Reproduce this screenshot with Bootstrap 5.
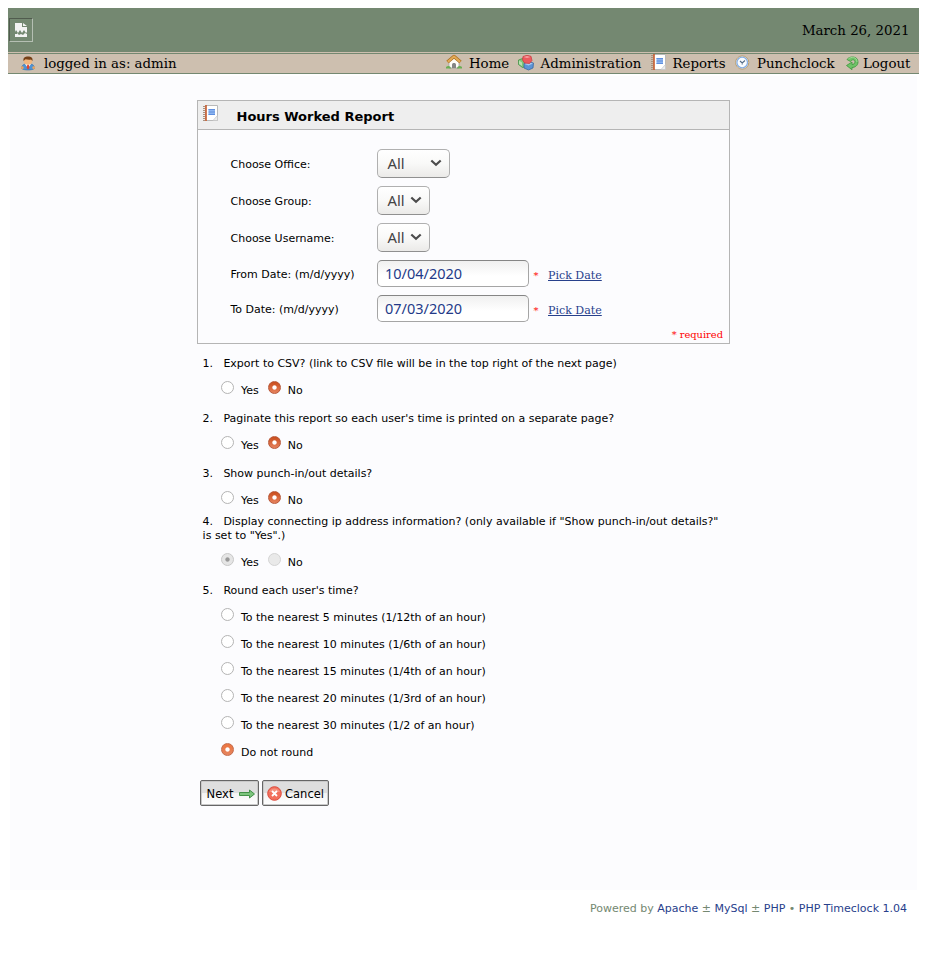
<!DOCTYPE html>
<html lang="en">
<head>
<meta charset="utf-8">
<meta name="viewport" content="width=device-width, initial-scale=1">
<title>Hours Worked Report</title>
<link rel="stylesheet" href="https://cdn.jsdelivr.net/npm/bootstrap@5.3.0/dist/css/bootstrap.min.css">
<style>
body{padding:8px;background:#fff;color:#000;font:11px/14px "DejaVu Sans",sans-serif}
.top-bar{height:44px;background:#748871;font:13.33px/16px "DejaVu Serif",serif;padding-right:9.500px;padding-left:1px}
.top-date{padding-top:2px}
.broken-img{width:24px;height:24px;border:1px solid;border-color:#505b4e #b5bfb3 #b5bfb3 #505b4e}
.menu-bar{height:22px;background:#cdbfaf;border-bottom:1px solid #748871;box-shadow:inset 0 1px #cdbfaf,inset 0 2px #748871;font:13.33px/16px "DejaVu Serif",serif}
.menu-bar a{color:#000;text-decoration:none;white-space:nowrap;padding-top:3px}
.menu-bar svg{margin-top:-1px}
.menu-bar span{display:block;padding-top:1px}
.menu-bar .w-admin svg{margin-top:0}
.menu-bar .user-link svg{margin-top:1px}
.w-home{width:72px}.w-admin{width:133px}.w-reports{width:84px}.w-clock{width:110px}.w-logout{width:74px}
.g7{gap:7px}.g6{gap:6px}.g3{gap:2px}
.w-admin{gap:6.600px}.w-reports{gap:5.500px}
.page-area{margin:2px 2px 0;height:814px;background:#fcfcfe;padding:24px 0 0 187px}
.report-box{width:533px;height:244px;border:1px solid #b5b5b5}
.report-head{height:29px;background:#eee;border-bottom:1px solid #b5b5b5;padding-left:5px;gap:17.500px}
.report-head svg{margin-top:4px}
.report-head h1{font:bold 13px/16px "DejaVu Sans",sans-serif;margin:8px 0 0}
.field-list{padding:19px 0 0 32.500px}
.field-row{height:29px;margin-bottom:8px}
.field-row.date-row{height:27px}
.field-row label{width:146.500px;padding-top:2px}
.pick-box{height:29px;width:53px;border:1px solid #b0b0b0;border-bottom-color:#909090;border-radius:5px;background:linear-gradient(#fff,#f9f9f8 50%,#ebeae8);color:#444;font:14.8px/26px "Noto Sans",sans-serif;padding:0 7px 2px 9.500px}
.pick-box svg{margin-top:1px}
.pick-box.wide{width:73px}
.date-box{width:152px;height:27px;border:1px solid #a5a5a5;border-top-color:#858585;border-radius:5px;background:linear-gradient(#f0f0f0,#fff 60%);color:#243a88;font:14.5px/20px "Noto Sans",sans-serif;padding:0 7px 2px}
.star{color:red;width:19px;padding-left:4.500px;font:10px/14px "DejaVu Serif",serif;padding-top:4px}
.pick-link{color:#27408b;font:11.050px/14px "DejaVu Serif",serif;padding-top:4px}
.req-note{color:red;font:9.900px/12px "DejaVu Serif",serif;padding-right:6px;margin-top:-1px}
.question-list{width:533px;padding:13px 0 0 5.600px}
.question-list p{margin:0 0 7px}
.question-list b{font-weight:400;display:inline-block;width:20.800px}
.opt-row{height:27px;padding-left:18.400px;margin-bottom:7px}
.opt-row.tight{margin-bottom:0}
.opt-row label{display:flex;align-items:center;white-space:nowrap;margin-top:-2px}
.opt-row label+label{margin-left:9px}
.dot{width:13px;height:13px;border-radius:50%;border:1px solid #b4b4b4;background:#fff;margin:-7px 7px 0 0;flex:none}
.dot.on{border-color:#b8593a;background:radial-gradient(circle,#fff 0 1.7px,transparent 2.6px),linear-gradient(#c94d1c,#e6825e)}
.dot.soft{border-color:#c36b4c;background:radial-gradient(circle,#fff 0 1.7px,transparent 2.6px),linear-gradient(#ed7540,#e5855f)}
.dot.off{border-color:#d4d4d4;background:#e9e9e9}
.dot.off-on{border-color:#c8c8c8;background:radial-gradient(circle,#999 0 1.7px,transparent 2.6px),#e5e5e5}
.act-row{padding:13px 0 0 3px;gap:3px}
.act-btn{height:26px;border:1px solid #666;border-radius:2px;box-shadow:inset 0 0 0 1px #c9c9c9;background:linear-gradient(#dedede 0 48%,#f3f3f3 52%,#fff);font:12.800px/14px "DejaVu Sans Condensed","DejaVu Sans",sans-serif;color:#000;padding:1px 0 0}
.next-btn{width:59px;gap:6px;padding-left:3px}.cancel-btn{width:67px;gap:3px}
.foot-line{color:#748871;padding:12px 12px 0 0}
.foot-line a{color:#27408b;text-decoration:none}
</style>
<script src="https://cdn.jsdelivr.net/npm/bootstrap@5.3.0/dist/js/bootstrap.bundle.min.js"></script>
</head>
<body>
<svg class="d-none">
<symbol id="book" viewBox="0 0 16 16"><path fill="#fff" stroke="#b9b9b9" d="M2.500.5h12v15h-12z"/><path fill="#eee" stroke="#c4c4c4" stroke-width=".7" d="M10 15.500h4.500v-5z"/><path fill="#c75a2c" d="M2.200 0h1.600v16H2.200z"/><path stroke="#a99280" stroke-width="2" stroke-dasharray="1 1" d="M1 1v15"/><path fill="#8db5f0" d="M5.500 4h6.500v6H5.500z"/><path stroke="#5f8fe0" d="M5.500 4.500H12M5.500 9.500H12"/><path stroke="#4779d0" stroke-width=".6" d="M5.500 7H12"/></symbol>
<symbol id="chev" viewBox="0 0 12 8"><path fill="none" stroke="#4c4c4c" stroke-width="2.200" d="m1.300 1.500 4.700 4.300 4.700-4.300"/></symbol>
</svg>
<header>
<div class="top-bar d-flex align-items-center justify-content-between">
<div class="broken-img d-flex align-items-center justify-content-center"><svg width="12" height="14" viewBox="0 0 12 14"><path fill="#f3f3f3" d="M0 0h7v4h5v5l-1 1-2-3-2 3-2-3-2 3-2-3-1 2H0zM8 0l4 3H8zM0 11h2v-1l2 2 2-1 2 1 2-2 2 1v3H0z"/></svg></div>
<div class="top-date">March 26, 2021</div>
</div>
<nav class="menu-bar d-flex">
<a class="d-flex me-auto user-link" href="#"><svg class="ms-2 me-1" width="24" height="16" viewBox="0 0 24 16"><path fill="#4f93d4" stroke="#346da8" stroke-width=".6" d="M5.500 12.500c.2-3 2-4.500 4-4.500h5c2 0 4 1.500 4 4.500-3 2-10 2-13 0z"/><path fill="#fff" d="m9 8 3 4 3-4z"/><path fill="#e0452f" d="M11.300 8.500h1.500l.7 3.500-1.500 1.500-1.300-1.500z"/><circle cx="6.300" cy="11.700" r="1.400" fill="#eda45c"/><circle cx="17.700" cy="11.700" r="1.400" fill="#eda45c"/><ellipse cx="12" cy="5.200" rx="4.200" ry="3.600" fill="#f1b780"/><path fill="#754017" d="M7.500 5C7 1.500 9 .5 12 .5s5 1 4.500 4.500L15 3.500c-2 .5-4 0-5.500-.2z"/></svg><span>logged in as: admin</span></a>
<a class="d-flex g7 w-home" href="#"><svg width="16" height="16" viewBox="0 0 16 16"><path fill="#fffdf8" stroke="#999" stroke-width=".7" d="M3 7.500 8 3.500l5 4V14H3z"/><path fill="#858585" d="M6 14v-3.500c0-2 4-2 4 0V14z"/><path fill="none" stroke="#a7691c" stroke-width="3.600" stroke-linejoin="round" d="M1.500 8 8 2.500 14.500 8"/><path fill="none" stroke="#e2aa56" stroke-width="2.200" stroke-linejoin="round" d="M1.800 7.800 8 2.500l6.200 5.300"/><path fill="#6aad54" d="M0 13c2-2 5-1 5 1.500H0zM11 14.500c0-2.500 3-3.500 5-1.500v1.500z"/></svg><span>Home</span></a>
<a class="d-flex w-admin" href="#"><svg width="16" height="16" viewBox="0 0 16 16"><path fill="#7ec47a" stroke="#388b3c" stroke-width=".7" d="m.5 5 4-1.500 3 3v5l-3 1-4-3z"/><path fill="#b7e1b0" d="m1 5.500 3 2V11L1 9z"/><path fill="#5c94d5" stroke="#2f609e" stroke-width=".7" d="m6 8.500 4-2L15.500 8l-.5 5-4.500 2L6 13z"/><path fill="#a7c8ef" d="m6.500 9 4 1.500L15 8.500 10.500 7z"/><path fill="#ec5a5e" stroke="#c8353c" stroke-width=".7" d="m5 1.500 4-1.200 4 1 1 4.200-2.500 3L6.500 8 4.500 5z"/><path fill="#f7a0a0" d="m5.500 2 3.500 1 3.500-1L9 .9z"/></svg><span>Administration</span></a>
<a class="d-flex w-reports" href="#"><svg width="16" height="16"><use href="#book"/></svg><span>Reports</span></a>
<a class="d-flex g6 w-clock" href="#"><svg width="16" height="16" viewBox="0 0 16 16"><circle cx="7.200" cy="8.500" r="6.600" fill="#f9fcff" stroke="#b99c6c" stroke-width="1"/><circle cx="7.200" cy="8.500" r="5.300" fill="none" stroke="#86aee3" stroke-width="1.300"/><path fill="none" stroke="#536b86" stroke-width="1.100" d="m5 7 2.200 2L10 6.500M7.200 9v1.500"/></svg><span>Punchclock</span></a>
<a class="d-flex g3 w-logout" href="#"><svg width="16" height="16" viewBox="0 0 16 16"><path fill="#6fc267" stroke="#3b963c" stroke-width=".8" stroke-linejoin="round" d="M2 5.500C4 2 13 1.500 13 8c0 3.500-3 5.500-6 5.500v2.200L1.500 11.500 7 8v2.500c1.500 0 3-1 3-2.500C10 5.500 7 5 5.500 7.500z"/><path fill="none" stroke="#a5dd9c" stroke-width=".9" d="M3.300 5C6 2.500 12 2.500 12 8"/></svg><span>Logout</span></a>
</nav>
</header>
<main class="page-area">
<section class="report-box">
<div class="report-head d-flex"><svg width="16" height="16"><use href="#book"/></svg><h1>Hours Worked Report</h1></div>
<div class="field-list">
<div class="field-row d-flex align-items-center"><label>Choose Office:</label><div class="pick-box wide d-flex align-items-center justify-content-between">All<svg width="12" height="8"><use href="#chev"/></svg></div></div>
<div class="field-row d-flex align-items-center"><label>Choose Group:</label><div class="pick-box d-flex align-items-center justify-content-between">All<svg width="12" height="8"><use href="#chev"/></svg></div></div>
<div class="field-row d-flex align-items-center"><label>Choose Username:</label><div class="pick-box d-flex align-items-center justify-content-between">All<svg width="12" height="8"><use href="#chev"/></svg></div></div>
<div class="field-row date-row d-flex align-items-center"><label for="from">From Date: (m/d/yyyy)</label><input id="from" class="date-box" value="10/04/2020"><span class="star">*</span><a class="pick-link" href="#">Pick Date</a></div>
<div class="field-row date-row d-flex align-items-center"><label for="to">To Date: (m/d/yyyy)</label><input id="to" class="date-box" value="07/03/2020"><span class="star">*</span><a class="pick-link" href="#">Pick Date</a></div>
</div>
<div class="req-note text-end">* required</div>
</section>
<section class="question-list">
<p><b>1.</b>Export to CSV? (link to CSV file will be in the top right of the next page)</p>
<div class="opt-row d-flex"><label><i class="dot"></i>Yes</label><label><i class="dot on"></i>No</label></div>
<p><b>2.</b>Paginate this report so each user's time is printed on a separate page?</p>
<div class="opt-row d-flex"><label><i class="dot"></i>Yes</label><label><i class="dot on"></i>No</label></div>
<p><b>3.</b>Show punch-in/out details?</p>
<div class="opt-row tight d-flex"><label><i class="dot"></i>Yes</label><label><i class="dot on"></i>No</label></div>
<p><b>4.</b>Display connecting ip address information? (only available if "Show punch-in/out details?"<br>is set to "Yes".)</p>
<div class="opt-row d-flex"><label><i class="dot off-on"></i>Yes</label><label><i class="dot off"></i>No</label></div>
<p><b>5.</b>Round each user's time?</p>
<div class="opt-row tight d-flex"><label><i class="dot"></i>To the nearest 5 minutes (1/12th of an hour)</label></div>
<div class="opt-row tight d-flex"><label><i class="dot"></i>To the nearest 10 minutes (1/6th of an hour)</label></div>
<div class="opt-row tight d-flex"><label><i class="dot"></i>To the nearest 15 minutes (1/4th of an hour)</label></div>
<div class="opt-row tight d-flex"><label><i class="dot"></i>To the nearest 20 minutes (1/3rd of an hour)</label></div>
<div class="opt-row tight d-flex"><label><i class="dot"></i>To the nearest 30 minutes (1/2 of an hour)</label></div>
<div class="opt-row tight d-flex"><label><i class="dot soft"></i>Do not round</label></div>
</section>
<div class="act-row d-flex">
<button class="act-btn next-btn d-flex align-items-center justify-content-center">Next<svg width="16" height="10" viewBox="0 0 16 10"><path fill="#7cc47c" stroke="#35883b" stroke-width=".9" d="M.5 3.500h10V1L15.500 5l-5 4V6.500H.5z"/></svg></button>
<button class="act-btn cancel-btn d-flex align-items-center justify-content-center"><svg width="15" height="15" viewBox="0 0 15 15"><circle cx="7.500" cy="7.500" r="6.800" fill="#f2705c" stroke="#dc4a3c"/><path fill="#f9a897" d="M2 6a6 6 0 0 1 11 0z" opacity=".6"/><path stroke="#fff" stroke-width="1.800" d="m5 5 5 5m0-5-5 5"/></svg>Cancel</button>
</div>
</main>
<footer class="foot-line text-end">Powered by <a href="#">Apache</a> ± <a href="#">MySql</a> ± <a href="#">PHP</a> • <a href="#">PHP Timeclock 1.04</a></footer>
</body>
</html>
